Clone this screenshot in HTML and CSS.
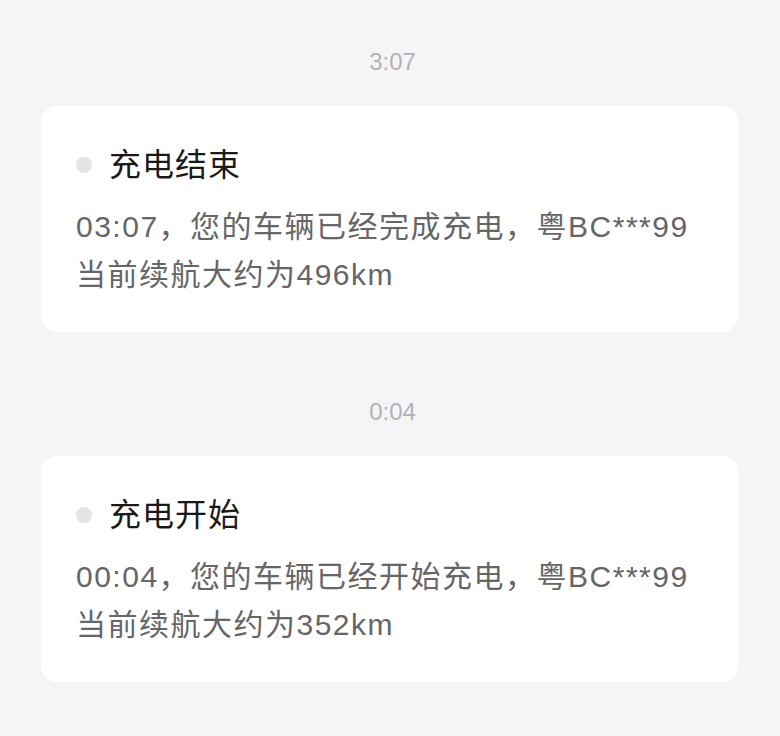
FILE: index.html
```html
<!DOCTYPE html>
<html lang="zh-CN">
<head>
  <meta charset="UTF-8">
  <title>消息通知</title>
  <link rel="stylesheet" href="styles.css">
</head>
<body>
  <div class="list">
    <div class="time">3:07</div>
    <div class="card">
      <div class="card-title"><span class="dot"></span>充电结束</div>
      <div class="card-body">03:07，您的车辆已经完成充电，粤BC***99<br>当前续航大约为496km</div>
    </div>

    <div class="time">0:04</div>
    <div class="card">
      <div class="card-title"><span class="dot"></span>充电开始</div>
      <div class="card-body">00:04，您的车辆已经开始充电，粤BC***99<br>当前续航大约为352km</div>
    </div>
  </div>
</body>
</html>
```

FILE: styles.css
```css
body {
  margin: 0;
  background: #f5f5f8;
  font-family: "Liberation Sans", "Noto Sans CJK SC", sans-serif;
}

.list {
  padding: 47px 42px 0 41px;
}

.time {
  text-align: center;
  font-size: 24px;
  line-height: 30px;
  color: #b2b2b6;
  padding-left: 6px;
  margin-bottom: 29px;
}

.card + .time {
  margin-top: 65px;
}

.card {
  background: #fff;
  border-radius: 16px;
  padding: 37px 34px 33px 35px;
}

.card-title {
  display: flex;
  align-items: center;
  font-size: 32px;
  line-height: 44px;
  color: #1a1a1a;
  letter-spacing: 1px;
}

.dot {
  width: 16px;
  height: 16px;
  border-radius: 50%;
  background: #e4e4e6;
  margin-right: 17px;
}

.card-body {
  margin-top: 16px;
  font-size: 30px;
  line-height: 48px;
  color: #666;
  letter-spacing: 1.5px;
}
```
